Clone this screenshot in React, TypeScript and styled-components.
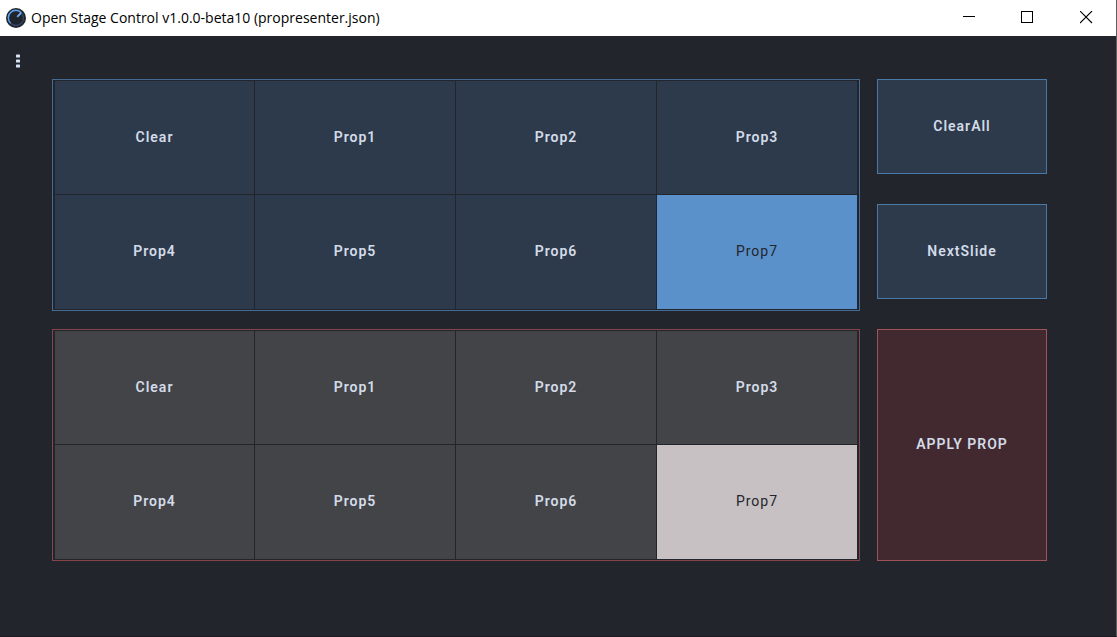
import React, { useState } from "react";
import styled, { createGlobalStyle } from "styled-components";

const GlobalStyle = createGlobalStyle`
  *, *::before, *::after { box-sizing: border-box; }
  body { margin: 0; background: #22252c; }
  button { font: inherit; cursor: pointer; }
`;

const Window = styled.div`
  min-height: 100vh;
  display: flex;
  flex-direction: column;
  background: #22252c;
  border-right: 1px solid #5c5e60;
  border-bottom: 1px solid #1d1a22;
`;

const TitleBar = styled.header`
  display: flex;
  align-items: center;
  height: 36px;
  padding-left: 6px;
  background: #fff;
  color: #000;
`;

const Title = styled.h1`
  flex: 1;
  margin: 0 0 0 5px;
  font: 400 14px/20px "Open Sans", "Noto Sans", sans-serif;
  white-space: nowrap;
`;

const WindowButton = styled.button`
  display: flex;
  align-items: center;
  justify-content: center;
  width: 59px;
  height: 36px;
  padding: 0 0 1px;
  border: 0;
  background: transparent;
  color: #000;
`;

const Body = styled.div`
  flex: 1;
  display: flex;
  align-items: flex-start;
  padding-right: 69px;
`;

const MenuButton = styled.button`
  display: flex;
  justify-content: center;
  width: 36px;
  margin-right: 16px;
  padding: 18px 0;
  border: 0;
  background: transparent;
  color: #d5e3f5;
`;

const Panel = styled.main`
  flex: 1;
  display: grid;
  grid-template-columns: minmax(0, 1fr) 170px;
  gap: 18px 17px;
  padding: 43px 0;
  font: 600 14px/20px Roboto, sans-serif;
  letter-spacing: 1px;
`;

const tones = {
  blue: { line: "#436b93", fill: "#2d3a4b", on: "#5b91ca", action: "#2d3a4b", actionLine: "#4a79a8" },
  red: { line: "#86454b", fill: "#434448", on: "#c7c1c3", action: "#41292f", actionLine: "#a05358" },
};
type Tone = keyof typeof tones;

const SwitchGrid = styled.section<{ $tone: Tone }>`
  display: grid;
  grid-template-columns: minmax(0, 199fr) repeat(3, minmax(0, 200fr));
  grid-template-rows: 113fr 114fr;
  gap: 1px;
  height: 232px;
  padding: 1px 2px;
  border: 1px solid ${(p) => tones[p.$tone].line};
`;

const Cell = styled.button<{ $tone: Tone; $on: boolean }>`
  padding: 0 0 2px;
  border: 0;
  letter-spacing: inherit;
  background: ${(p) => (p.$on ? tones[p.$tone].on : tones[p.$tone].fill)};
  color: ${(p) => (p.$on ? "#22252c" : "#d3dbe8")};
  font-weight: ${(p) => (p.$on ? 400 : 600)};
`;

const Actions = styled.div`
  display: flex;
  flex-direction: column;
  gap: 30px;
`;

const ActionButton = styled.button<{ $tone: Tone; $tall?: boolean }>`
  height: ${(p) => (p.$tall ? 232 : 95)}px;
  padding: 0 0 2px;
  border: 1px solid ${(p) => tones[p.$tone].actionLine};
  background: ${(p) => tones[p.$tone].action};
  color: #d3dbe8;
  letter-spacing: inherit;
`;

const labels = ["Clear", "Prop1", "Prop2", "Prop3", "Prop4", "Prop5", "Prop6", "Prop7"];

function PropSwitch({ tone, name }: { tone: Tone; name: string }) {
  const [selected, setSelected] = useState("Prop7");
  return (
    <SwitchGrid $tone={tone} aria-label={name}>
      {labels.map((label) => (
        <Cell
          key={label}
          type="button"
          $tone={tone}
          $on={label === selected}
          aria-pressed={label === selected}
          onClick={() => setSelected(label)}
        >
          {label}
        </Cell>
      ))}
    </SwitchGrid>
  );
}

function Logo() {
  return (
    <svg width="20" height="20" viewBox="0 0 20 20" fill="none" aria-hidden="true">
      <circle cx="10" cy="10" r="10" fill="#20242c" />
      <circle cx="10" cy="10" r="7.5" stroke="#35485f" strokeWidth="1.3" />
      <path d="M4.7 15.3A7.5 7.5 0 1 1 15.3 4.7" stroke="#5fa3ee" strokeWidth="1.4" />
      <path d="M11.2 8.8L15 5" stroke="#6fb0f5" strokeWidth="1.8" />
    </svg>
  );
}

export default function App() {
  return (
    <Window>
      <GlobalStyle />
      <TitleBar>
        <Logo />
        <Title>Open Stage Control v1.0.0-beta10 (propresenter.json)</Title>
        <WindowButton type="button" aria-label="Minimize">
          <svg width="13" height="13" shapeRendering="crispEdges"><path d="M1 5h12v1H1z" /></svg>
        </WindowButton>
        <WindowButton type="button" aria-label="Maximize">
          <svg width="13" height="13"><rect x="0.5" y="0.5" width="11" height="11" fill="none" stroke="currentColor" /></svg>
        </WindowButton>
        <WindowButton type="button" aria-label="Close">
          <svg width="13" height="13"><path d="M0 0l12 12M12 0L0 12" stroke="currentColor" strokeWidth="1.1" /></svg>
        </WindowButton>
      </TitleBar>
      <Body>
        <MenuButton type="button" aria-label="Menu">
          <svg width="4" height="14" fill="currentColor">
            <rect y="0.5" width="4" height="3" rx="0.6" />
            <rect y="5.5" width="4" height="3" rx="0.6" />
            <rect y="10.5" width="4" height="3" rx="0.6" />
          </svg>
        </MenuButton>
        <Panel>
          <PropSwitch tone="blue" name="Live prop" />
          <Actions>
            <ActionButton type="button" $tone="blue">ClearAll</ActionButton>
            <ActionButton type="button" $tone="blue">NextSlide</ActionButton>
          </Actions>
          <PropSwitch tone="red" name="Next prop" />
          <ActionButton type="button" $tone="red" $tall>APPLY PROP</ActionButton>
        </Panel>
      </Body>
    </Window>
  );
}
